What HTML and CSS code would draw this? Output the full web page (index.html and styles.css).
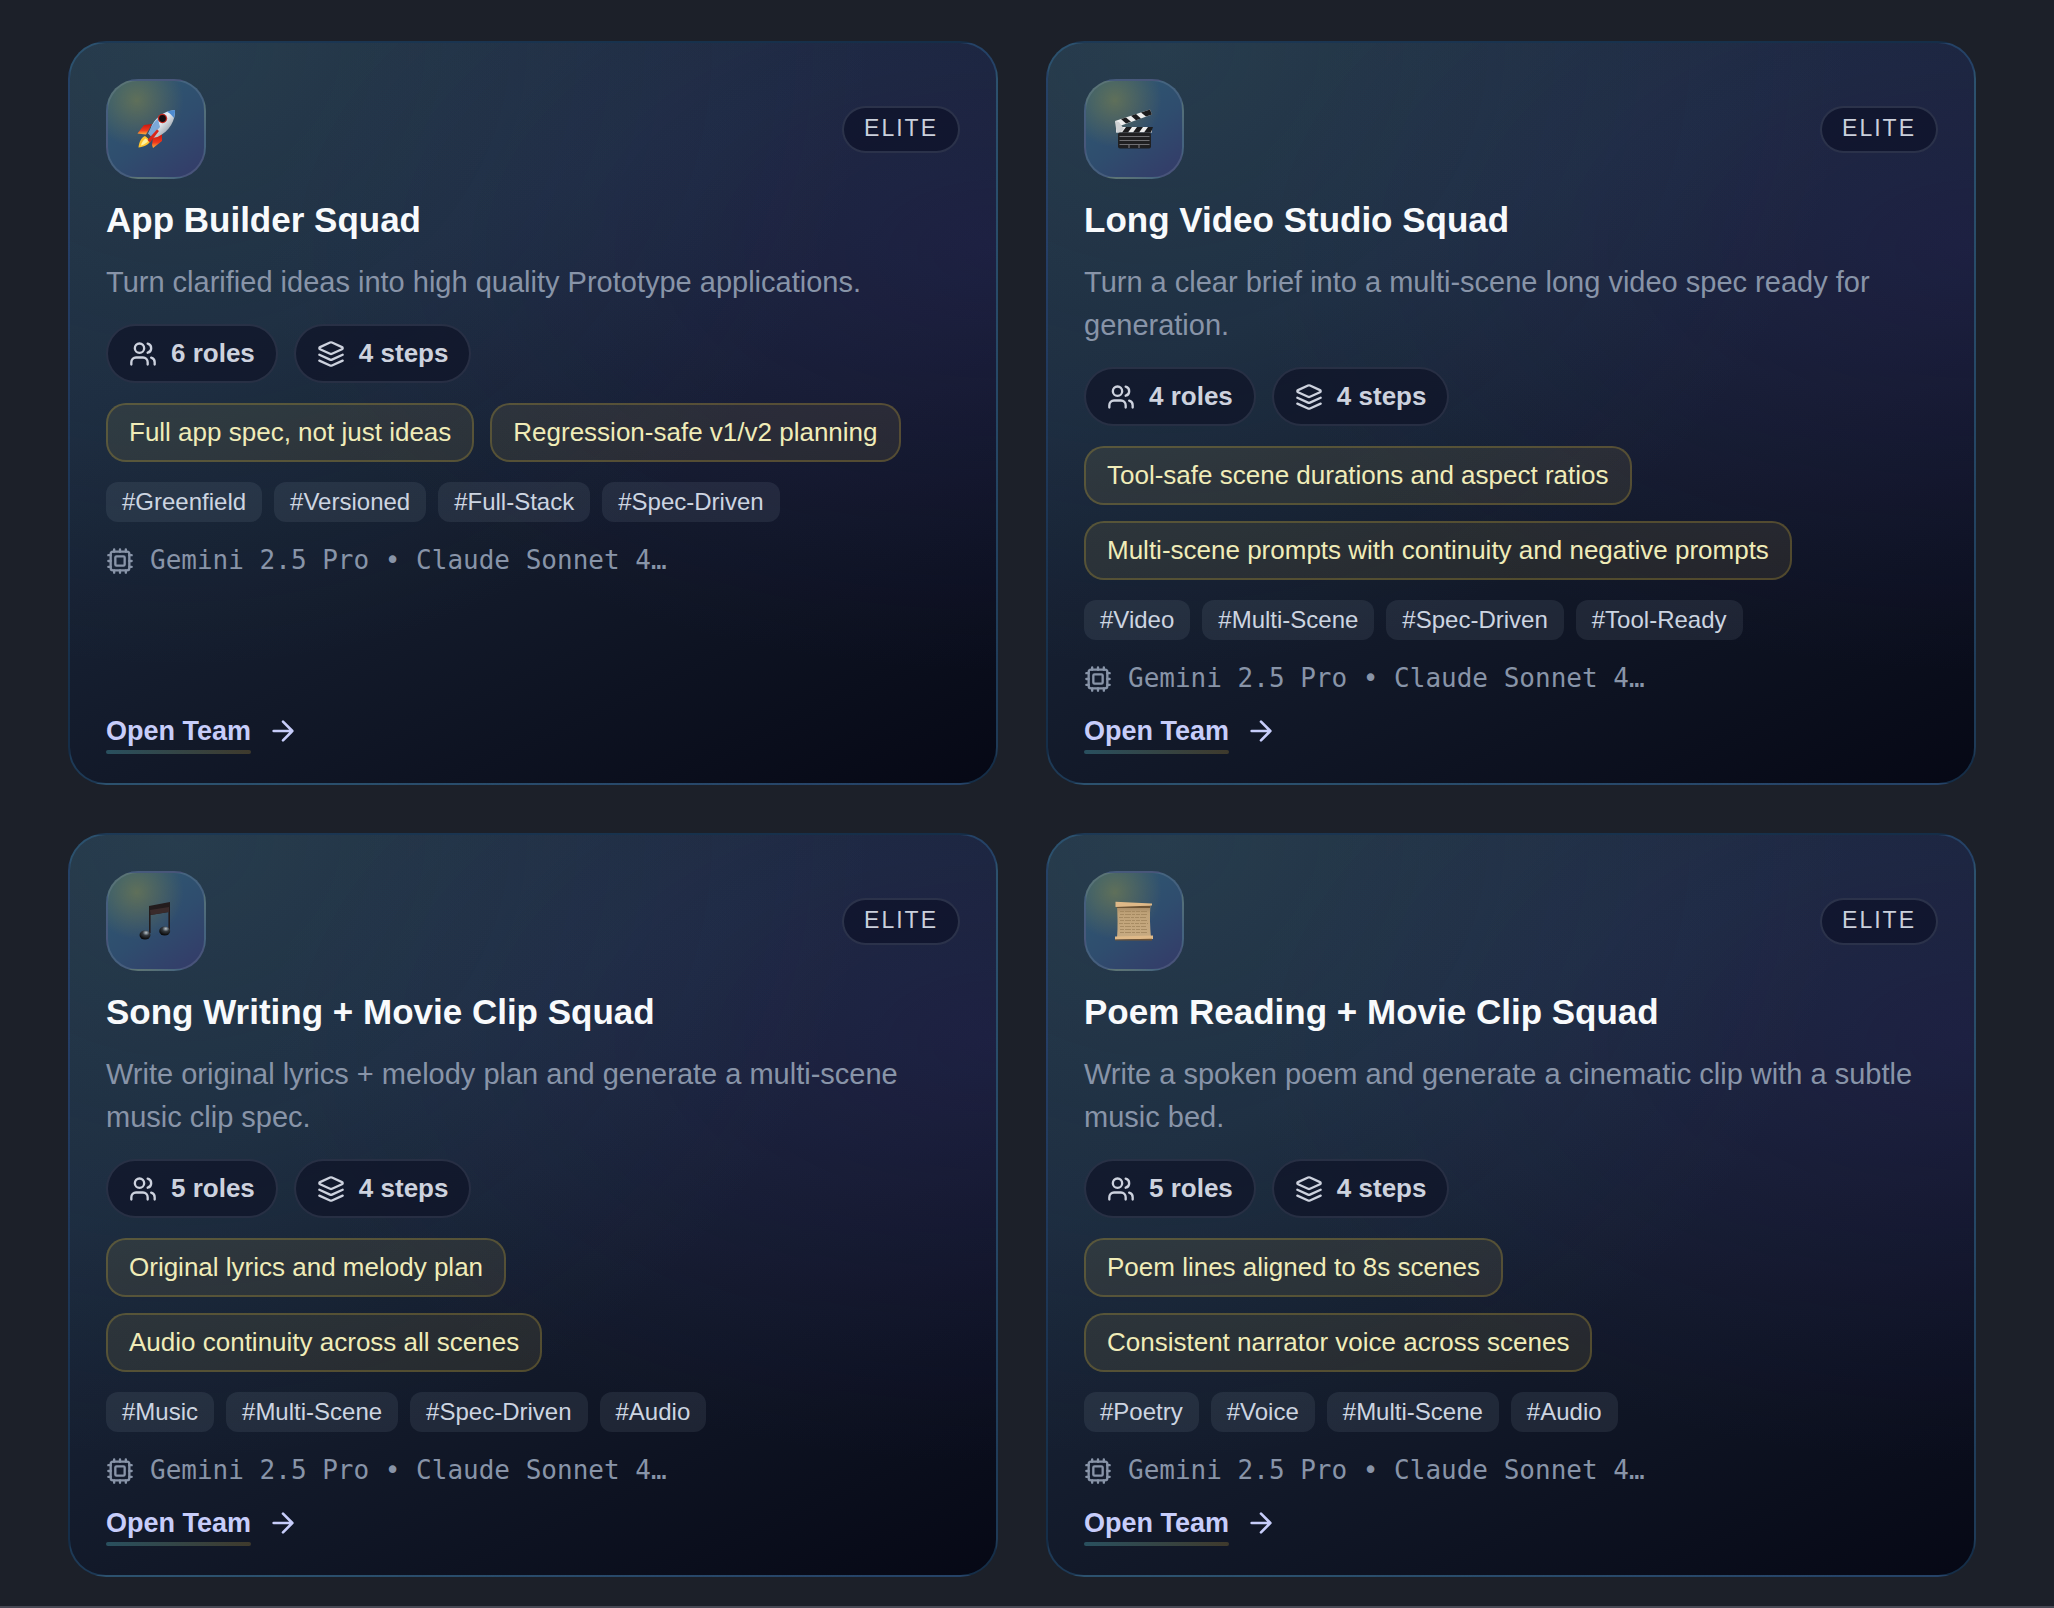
FILE: index.html
```html
<!DOCTYPE html>
<html lang="en">
<head>
<meta charset="utf-8">
<meta name="viewport" content="width=device-width, initial-scale=1">
<title>Squads</title>
<link rel="stylesheet" href="styles.css">
</head>
<body>
<svg class="sprite" aria-hidden="true">
  <defs>
    <linearGradient id="hull" x1="0" y1="0" x2="1" y2="1"><stop offset="0" stop-color="#7db4ea"/><stop offset=".45" stop-color="#e8eef4"/><stop offset="1" stop-color="#66717e"/></linearGradient>
    <linearGradient id="fin" x1="0" y1="0" x2="0" y2="1"><stop offset="0" stop-color="#c5160f"/><stop offset=".6" stop-color="#f0391c"/><stop offset="1" stop-color="#ffb43a"/></linearGradient>
    <linearGradient id="paper" x1="0" y1="0" x2="0" y2="1"><stop offset="0" stop-color="#a08460"/><stop offset=".25" stop-color="#bfa278"/><stop offset="1" stop-color="#c8ab82"/></linearGradient>
    <radialGradient id="note-head" cx=".6" cy=".25" r=".7"><stop offset="0" stop-color="#b9c4cc"/><stop offset=".45" stop-color="#33383d"/><stop offset="1" stop-color="#0b0b0c"/></radialGradient>
  </defs>
  <symbol id="users" viewBox="0 0 24 24"><path d="M16 21v-2a4 4 0 0 0-4-4H6a4 4 0 0 0-4 4v2"/><circle cx="9" cy="7" r="4"/><path d="M22 21v-2a4 4 0 0 0-3-3.87M16 3.13a4 4 0 0 1 0 7.75"/></symbol>
  <symbol id="layers" viewBox="0 0 24 24"><path d="m12.83 2.18a2 2 0 0 0-1.66 0L2.6 6.08a1 1 0 0 0 0 1.83l8.58 3.91a2 2 0 0 0 1.66 0l8.58-3.9a1 1 0 0 0 0-1.83Z"/><path d="m22 17.65-9.17 4.16a2 2 0 0 1-1.66 0L2 17.65"/><path d="m22 12.65-9.17 4.16a2 2 0 0 1-1.66 0L2 12.65"/></symbol>
  <symbol id="cpu" viewBox="0 0 24 24"><rect x="4" y="4" width="16" height="16" rx="2"/><rect x="8" y="8" width="8" height="8" rx="1"/><path d="M12 20v2M12 2v2M17 20v2M17 2v2M2 12h2M2 17h2M2 7h2M20 12h2M20 17h2M20 7h2M7 20v2M7 2v2"/></symbol>
  <symbol id="arrow" viewBox="0 0 24 24"><path d="M5 12h14M12 5l7 7-7 7"/></symbol>
  <symbol id="rocket" viewBox="0 0 40 40">
    <path d="M16 15 8 16 1.500 24.500 10 25.500Z" fill="url(#fin)"/>
    <path d="M17 29 26 25 26 32 17 39 16 36Z" fill="url(#fin)"/>
    <path d="M9 27C5 29 3 33 2.500 38.500 7 38 13 36 15 31Z" fill="#ffc42e"/>
    <path d="M9.500 29.500C7 31 5.500 34 5 36.500 8 35.500 11 34 12.500 31.500Z" fill="#fff3a0"/>
    <path d="M14.500 20C18 9 28 2 39 1 39.500 11 34 22 21.500 28L16 29 12 25Z" fill="url(#hull)"/>
    <path d="M31 2.700C33.500 1.700 36 1.200 39 1 39 4 38.700 6.500 38 9 36 6.500 34 4.200 31 2.700Z" fill="#4d8bd0"/>
    <path d="M14.500 20 12 25 15 28 24 18 22 10C18 13 16 16 14.500 20Z" fill="#5b93d2" opacity=".75"/>
    <path d="M12 24.500 17 29.500 14.500 32 9 26.500Z" fill="#3d4a5a"/>
    <path d="M11.500 31 21 20.500 23 22 14 33.500Z" fill="#d9261b"/>
    <circle cx="26.500" cy="9.500" r="4.700" fill="#c22a22"/><circle cx="26.500" cy="9.500" r="3.400" fill="#120c10"/>
  </symbol>
  <symbol id="clapper" viewBox="0 0 40 40">
    <path d="M1 12 36 .500 38 5.500 3 18Z" fill="#eee"/>
    <path d="m7 10 5 4.500 5-1.700L12 8.400ZM17 6.700l5 4.500 5-1.800L22 5ZM27 3.500l5 4L38 5.500 36 .500Z" fill="#1c1c1e"/>
    <rect x="2" y="18" width="36" height="5.500" fill="#eee"/>
    <path d="m12 18-4 5.500h6l4-5.500ZM23 18l-4 5.500h6l4-5.500ZM34 18l-4 5.500h7L39 18Z" fill="#1c1c1e"/>
    <path d="M1 12 5 13 10 20 7 23 2.500 23.500Z" fill="#cfd1d3"/>
    <rect x="4" y="23.500" width="33" height="16" rx="2" fill="#202022"/>
    <path d="M5.500 27.500h30M5.500 31.500h30M5.500 35.500h30M15 36v3M25 36v3" stroke="#707074" stroke-width="1.200"/>
  </symbol>
  <symbol id="music" viewBox="0 0 40 40">
    <path d="M13 5 34 1V29h-1.600V11L14.600 14V32H13Z" fill="#231c1d"/>
    <path d="M14 9 33 6V11L14.600 14Z" fill="#3a2b2b"/>
    <ellipse cx="9" cy="34" rx="5.500" ry="4.500" fill="url(#note-head)"/>
    <ellipse cx="28.700" cy="30" rx="5.500" ry="4.500" fill="url(#note-head)"/>
  </symbol>
  <symbol id="scroll" viewBox="0 0 40 40">
    <path d="M3 4H36.500C35.500 14 36 26 37 37H3C4 26 3.500 14 3 4Z" fill="url(#paper)"/>
    <path d="M6 10.500h27M6 13.500h28M5 16.500h28M6 19.500h27M5 22.500h29M6 25.500h26M6 28.500h27M6 31.500h28" stroke="#a0845c" stroke-width=".8" stroke-dasharray="4 1 6 1 3 1"/>
    <rect x="3" y="5" width="33" height="2" fill="#6e5434"/>
    <path d="M1.500 .800 38 2.500V4.500L1.500 6Z" fill="#dfb988"/>
    <path d="M1 35.500 39 34.500V38L1 38.700Z" fill="#dfb988"/><path d="M1 38.400 38 37.800V39.500H1Z" fill="#6d5234"/>
  </symbol>
</svg>

<main class="squads">
  <article class="card">
    <header class="card-head"><span class="tile"><svg class="emoji" role="img" aria-label="Rocket"><use href="#rocket"/></svg></span><span class="badge">ELITE</span></header>
    <h2 class="title">App Builder Squad</h2>
    <p class="summary">Turn clarified ideas into high quality Prototype applications.</p>
    <ul class="stats"><li class="stat"><svg class="icon"><use href="#users"/></svg>6 roles</li><li class="stat"><svg class="icon"><use href="#layers"/></svg>4 steps</li></ul>
    <ul class="highlights"><li class="highlight">Full app spec, not just ideas</li><li class="highlight">Regression-safe v1/v2 planning</li></ul>
    <ul class="tags"><li class="tag">#Greenfield</li><li class="tag">#Versioned</li><li class="tag">#Full-Stack</li><li class="tag">#Spec-Driven</li></ul>
    <p class="models"><svg class="icon"><use href="#cpu"/></svg>Gemini 2.5 Pro • Claude Sonnet 4…</p>
    <a class="open" href="#app-builder"><span class="open-label">Open Team</span><svg class="icon arrow"><use href="#arrow"/></svg></a>
  </article>

  <article class="card">
    <header class="card-head"><span class="tile"><svg class="emoji" role="img" aria-label="Clapper board"><use href="#clapper"/></svg></span><span class="badge">ELITE</span></header>
    <h2 class="title">Long Video Studio Squad</h2>
    <p class="summary">Turn a clear brief into a multi-scene long video spec ready for generation.</p>
    <ul class="stats"><li class="stat"><svg class="icon"><use href="#users"/></svg>4 roles</li><li class="stat"><svg class="icon"><use href="#layers"/></svg>4 steps</li></ul>
    <ul class="highlights"><li class="highlight">Tool-safe scene durations and aspect ratios</li><li class="highlight">Multi-scene prompts with continuity and negative prompts</li></ul>
    <ul class="tags"><li class="tag">#Video</li><li class="tag">#Multi-Scene</li><li class="tag">#Spec-Driven</li><li class="tag">#Tool-Ready</li></ul>
    <p class="models"><svg class="icon"><use href="#cpu"/></svg>Gemini 2.5 Pro • Claude Sonnet 4…</p>
    <a class="open" href="#long-video"><span class="open-label">Open Team</span><svg class="icon arrow"><use href="#arrow"/></svg></a>
  </article>

  <article class="card">
    <header class="card-head"><span class="tile"><svg class="emoji" role="img" aria-label="Musical note"><use href="#music"/></svg></span><span class="badge">ELITE</span></header>
    <h2 class="title">Song Writing + Movie Clip Squad</h2>
    <p class="summary">Write original lyrics + melody plan and generate a multi-scene music clip spec.</p>
    <ul class="stats"><li class="stat"><svg class="icon"><use href="#users"/></svg>5 roles</li><li class="stat"><svg class="icon"><use href="#layers"/></svg>4 steps</li></ul>
    <ul class="highlights stacked"><li class="highlight">Original lyrics and melody plan</li><li class="highlight">Audio continuity across all scenes</li></ul>
    <ul class="tags"><li class="tag">#Music</li><li class="tag">#Multi-Scene</li><li class="tag">#Spec-Driven</li><li class="tag">#Audio</li></ul>
    <p class="models"><svg class="icon"><use href="#cpu"/></svg>Gemini 2.5 Pro • Claude Sonnet 4…</p>
    <a class="open" href="#song-writing"><span class="open-label">Open Team</span><svg class="icon arrow"><use href="#arrow"/></svg></a>
  </article>

  <article class="card">
    <header class="card-head"><span class="tile"><svg class="emoji" role="img" aria-label="Scroll"><use href="#scroll"/></svg></span><span class="badge">ELITE</span></header>
    <h2 class="title">Poem Reading + Movie Clip Squad</h2>
    <p class="summary">Write a spoken poem and generate a cinematic clip with a subtle music bed.</p>
    <ul class="stats"><li class="stat"><svg class="icon"><use href="#users"/></svg>5 roles</li><li class="stat"><svg class="icon"><use href="#layers"/></svg>4 steps</li></ul>
    <ul class="highlights stacked"><li class="highlight">Poem lines aligned to 8s scenes</li><li class="highlight">Consistent narrator voice across scenes</li></ul>
    <ul class="tags"><li class="tag">#Poetry</li><li class="tag">#Voice</li><li class="tag">#Multi-Scene</li><li class="tag">#Audio</li></ul>
    <p class="models"><svg class="icon"><use href="#cpu"/></svg>Gemini 2.5 Pro • Claude Sonnet 4…</p>
    <a class="open" href="#poem-reading"><span class="open-label">Open Team</span><svg class="icon arrow"><use href="#arrow"/></svg></a>
  </article>
</main>
</body>
</html>
```
FILE: styles.css
```css
* { box-sizing: border-box; }

body {
  margin: 0;
  background: #1c2029;
  color: #f8fafc;
  font-family: "Liberation Sans", Arial, sans-serif;
}

h2, p, ul { margin: 0; padding: 0; }
ul { list-style: none; }

.sprite { position: absolute; width: 0; height: 0; }

.squads {
  display: grid;
  grid-template-columns: repeat(2, minmax(0, 1fr));
  gap: 48px;
  padding: 41px 78px 29px 68px;
  border-bottom: 2px solid #474854;
}

.card {
  display: flex;
  flex-direction: column;
  gap: 20px;
  padding: 36px;
  border: 2px solid rgba(56, 132, 190, 0.3);
  border-radius: 38px;
  background:
    radial-gradient(ellipse at 12% 0%, rgba(72, 132, 142, 0.16), transparent 60%),
    radial-gradient(ellipse at 100% 28%, rgba(62, 44, 140, 0.2), transparent 56%),
    linear-gradient(155deg, #223042 0%, #1b283c 32%, #121929 64%, #060815 100%);
}

.card-head {
  display: flex;
  align-items: center;
  justify-content: space-between;
}

.tile {
  display: grid;
  place-items: center;
  width: 100px;
  height: 100px;
  border: 2px solid rgba(148, 163, 184, 0.22);
  border-radius: 32px;
  background:
    radial-gradient(circle at 30% 20%, rgba(180, 160, 50, 0.36), transparent 46%),
    linear-gradient(145deg, #2f5a72 0%, #2f4d6e 55%, #343a68 100%);
}

.emoji { width: 40px; height: 40px; }

.badge {
  padding: 0 20px 2px;
  border: 2px solid rgba(148, 163, 184, 0.2);
  border-radius: 24px;
  background: rgba(12, 16, 38, 0.68);
  color: #cbd0dc;
  font-size: 23px;
  line-height: 41px;
  letter-spacing: 2px;
}

.title {
  font-size: 35px;
  line-height: 42px;
  font-weight: 700;
}

.summary {
  color: #8894a8;
  font-size: 29px;
  line-height: 43px;
}

.stats, .highlights {
  display: flex;
  flex-wrap: wrap;
  gap: 16px;
}

.highlights.stacked {
  flex-direction: column;
  align-items: flex-start;
}

.stat, .highlight {
  display: flex;
  align-items: center;
  gap: 14px;
  padding: 0 21px;
  border: 2px solid rgba(148, 163, 184, 0.17);
  border-radius: 30px;
  background: rgba(14, 18, 38, 0.7);
  color: #cdd2de;
  font-size: 26px;
  line-height: 55px;
  font-weight: 700;
}

.highlight {
  border-color: rgba(202, 168, 52, 0.28);
  border-radius: 20px;
  background: rgba(202, 172, 82, 0.11);
  color: #f0ecb8;
  font-weight: 400;
}

.icon {
  flex: none;
  width: 28px;
  height: 28px;
  fill: none;
  stroke: currentColor;
  stroke-width: 2;
  stroke-linecap: round;
  stroke-linejoin: round;
}

.tags {
  display: flex;
  flex-wrap: wrap;
  gap: 12px;
}

.tag {
  padding: 0 16px;
  border-radius: 12px;
  background: rgba(148, 163, 184, 0.12);
  color: #cdd5e1;
  font-size: 24px;
  line-height: 40px;
}

.models {
  display: flex;
  align-items: center;
  gap: 16px;
  color: #8894a8;
  font-family: "DejaVu Sans Mono", monospace;
  font-size: 26px;
  line-height: 37px;
}

.open {
  display: flex;
  align-items: center;
  align-self: flex-start;
  gap: 16px;
  height: 30px;
  margin-top: auto;
  padding-bottom: 2px;
  color: #c7cdfa;
  font-size: 27px;
  line-height: 28px;
  font-weight: 700;
  text-decoration: none;
}

.open-label { position: relative; }

.open-label::after {
  content: "";
  position: absolute;
  inset: auto 0 -9px;
  height: 4px;
  border-radius: 2px;
  background: linear-gradient(90deg, #29505f, #3f3a2c);
}

.arrow { width: 32px; height: 32px; }
```
